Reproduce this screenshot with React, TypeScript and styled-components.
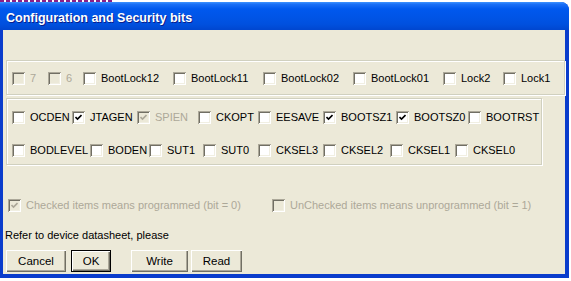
import React from 'react'
import styled, { createGlobalStyle } from 'styled-components'

const GlobalStyle = createGlobalStyle`
  html, body {
    margin: 0;
    padding: 0;
    background: #ffffff;
  }
  body {
    font-family: "Liberation Sans", Arial, sans-serif;
    font-size: 11px;
  }
`

const Screen = styled.div`
  width: 571px;
  height: 281px;
  overflow: hidden;
  background: #ffffff;
`

const Residue = styled.div`
  height: 2px;
  width: 112px;
  background: repeating-linear-gradient(90deg, #8a1f86 0 4px, #ffffff 4px 6px);
`

const Window = styled.div`
  width: 569px;
  height: 276px;
  display: flex;
  flex-direction: column;
  background: #0a3ccc;
  border-radius: 0 8px 0 0;
  overflow: hidden;
`

const TitleBar = styled.div`
  height: 28px;
  flex: none;
  display: flex;
  align-items: center;
  padding: 3px 0 0 6px;
  box-sizing: border-box;
  background: linear-gradient(
    to bottom,
    #3d93ff 0%,
    #1a6ff6 8%,
    #0058ee 25%,
    #0054e6 55%,
    #0050de 80%,
    #0046cf 100%
  );
`

const Title = styled.span`
  color: #ffffff;
  font-family: "Liberation Sans", Arial, sans-serif;
  font-weight: bold;
  font-size: 12.5px;
  text-shadow: 1px 1px 0 #0a1e8c;
`

const Client = styled.div`
  flex: 1;
  margin: 0 4px 4px 3px;
  background: #ece9d8;
  display: flex;
  flex-direction: column;
`

const Group = styled.div<{ $w: number; $h: number; $top: number }>`
  box-sizing: border-box;
  width: ${(p) => p.$w}px;
  height: ${(p) => p.$h}px;
  margin: ${(p) => p.$top}px 0 0 3px;
  border: 1px solid #d0d0bf;
  box-shadow: 1px 1px 0 #ffffff, inset 1px 1px 0 #ffffff;
  display: flex;
  flex-direction: column;
  gap: 20px;
  padding: ${(p) => (p.$h > 40 ? 12 : 11)}px 0 0 5px;
`

const Row = styled.div`
  display: flex;
  align-items: center;
  height: 13px;
`

const Item = styled.label<{ $w?: number; $off?: boolean }>`
  display: flex;
  align-items: center;
  flex: none;
  width: ${(p) => (p.$w ? `${p.$w}px` : 'auto')};
  color: ${(p) => (p.$off ? '#aca899' : '#000000')};
  white-space: nowrap;
  line-height: 13px;
`

const Box = styled.span<{ $off?: boolean }>`
  width: 13px;
  height: 13px;
  flex: none;
  box-sizing: border-box;
  margin-right: 5px;
  display: flex;
  align-items: center;
  justify-content: center;
  background: ${(p) => (p.$off ? '#ece9d8' : '#ffffff')};
  box-shadow: inset 1px 1px 0 #aca899, inset -1px -1px 0 #ffffff,
    inset 2px 2px 0 #716f64, inset -2px -2px 0 #f1efe2;
`

const Legend = styled.div`
  display: flex;
  align-items: center;
  height: 13px;
  margin: 34px 0 0 5px;
`

const Note = styled.div`
  margin: 17px 0 0 2px;
  line-height: 13px;
  color: #000000;
`

const Buttons = styled.div`
  display: flex;
  margin: 8px 0 0 3px;
`

const Button = styled.button<{ $w: number; $gap: number; $def?: boolean }>`
  width: ${(p) => p.$w}px;
  height: 22px;
  margin-left: ${(p) => p.$gap}px;
  padding: 0;
  font-family: "Liberation Sans", Arial, sans-serif;
  font-size: 11.5px;
  color: #000000;
  background: #ece9d8;
  border: ${(p) => (p.$def ? '1px solid #000000' : 'none')};
  box-shadow: inset 1px 1px 0 #ffffff, inset -1px -1px 0 #716f64,
    inset -2px -2px 0 #aca899;
`

function Check({ on, off }: { on?: boolean; off?: boolean }) {
  return (
    <Box $off={off}>
      {on && (
        <svg width="7" height="7" viewBox="0 0 7 7">
          <path
            d="M0.5 3 L2.5 5 L6.5 1"
            fill="none"
            stroke={off ? '#aca899' : '#000000'}
            strokeWidth="1.6"
          />
        </svg>
      )}
    </Box>
  )
}

type Bit = { name: string; w?: number; on?: boolean; off?: boolean }

const lockBits: Bit[] = [
  { name: '7', w: 36, off: true },
  { name: '6', w: 35, off: true },
  { name: 'BootLock12', w: 90 },
  { name: 'BootLock11', w: 90 },
  { name: 'BootLock02', w: 90 },
  { name: 'BootLock01', w: 90 },
  { name: 'Lock2', w: 60 },
  { name: 'Lock1' },
]

const highBits: Bit[] = [
  { name: 'OCDEN', w: 60 },
  { name: 'JTAGEN', w: 65, on: true },
  { name: 'SPIEN', w: 61, on: true, off: true },
  { name: 'CKOPT', w: 60 },
  { name: 'EESAVE', w: 65 },
  { name: 'BOOTSZ1', w: 73, on: true },
  { name: 'BOOTSZ0', w: 72, on: true },
  { name: 'BOOTRST' },
]

const lowBits: Bit[] = [
  { name: 'BODLEVEL', w: 78 },
  { name: 'BODEN', w: 59 },
  { name: 'SUT1', w: 54 },
  { name: 'SUT0', w: 55 },
  { name: 'CKSEL3', w: 65 },
  { name: 'CKSEL2', w: 67 },
  { name: 'CKSEL1', w: 65 },
  { name: 'CKSEL0' },
]

function BitRow({ bits }: { bits: Bit[] }) {
  return (
    <Row>
      {bits.map((b) => (
        <Item key={b.name} $w={b.w} $off={b.off}>
          <Check on={b.on} off={b.off} />
          {b.name}
        </Item>
      ))}
    </Row>
  )
}

export default function App() {
  return (
    <Screen>
      <GlobalStyle />
      <Residue />
      <Window>
        <TitleBar>
          <Title>Configuration and Security bits</Title>
        </TitleBar>
        <Client>
          <Group $w={559} $h={35} $top={30}>
            <BitRow bits={lockBits} />
          </Group>
          <Group $w={536} $h={67} $top={3}>
            <BitRow bits={highBits} />
            <BitRow bits={lowBits} />
          </Group>
          <Legend>
            <Item $w={264} $off>
              <Check on off />
              Checked items means programmed (bit = 0)
            </Item>
            <Item $off>
              <Check off />
              UnChecked items means unprogrammed (bit = 1)
            </Item>
          </Legend>
          <Note>Refer to device datasheet, please</Note>
          <Buttons>
            <Button $w={60} $gap={0}>Cancel</Button>
            <Button $w={40} $gap={5} $def>OK</Button>
            <Button $w={57} $gap={20}>Write</Button>
            <Button $w={51} $gap={3}>Read</Button>
          </Buttons>
        </Client>
      </Window>
    </Screen>
  )
}
